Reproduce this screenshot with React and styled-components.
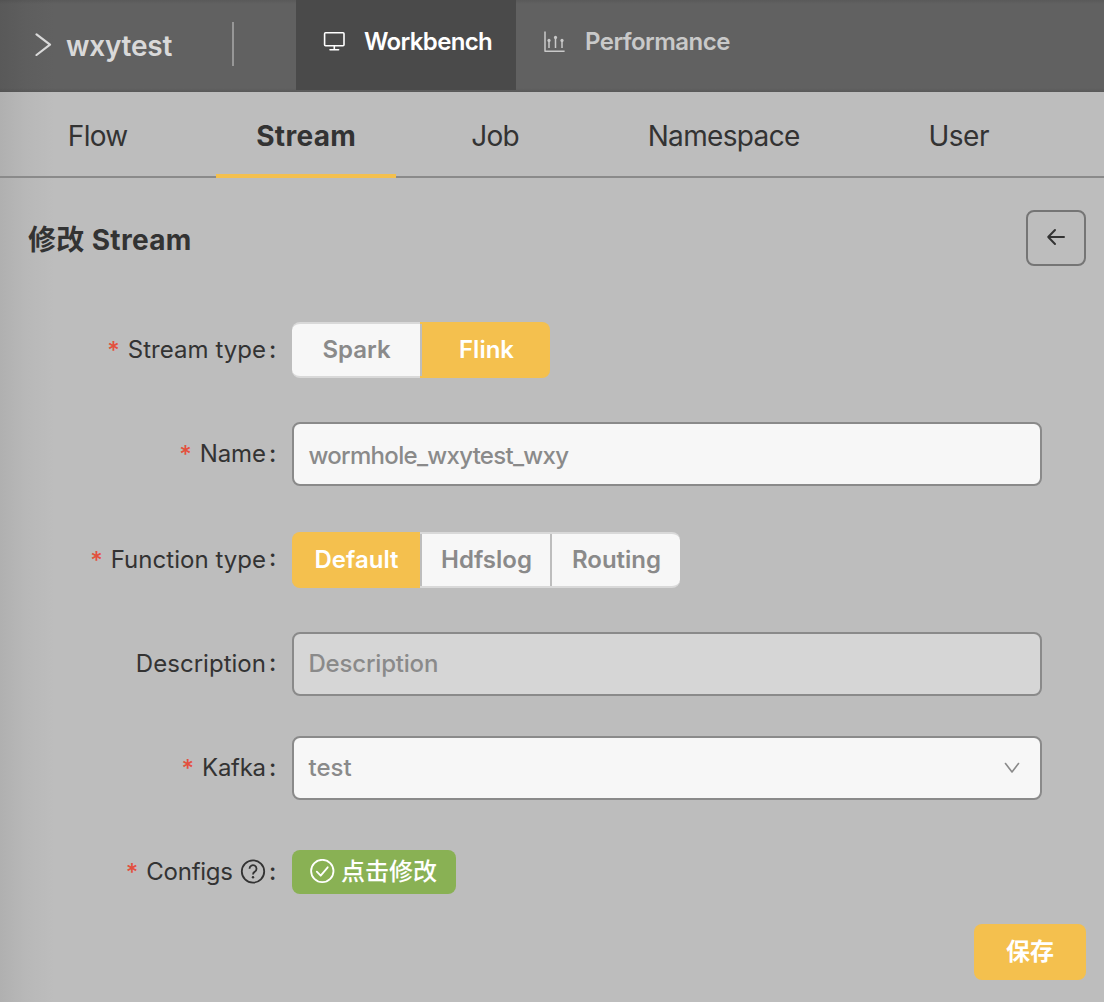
import React from 'react';
import styled, { createGlobalStyle } from 'styled-components';

const Global = createGlobalStyle`
  *, *::before, *::after { box-sizing: border-box; }
  body {
    margin: 0;
    background: #bdbdbd;
    font-family: Inter, "Noto Sans CJK SC", sans-serif;
    font-size: 24px;
    color: #333;
  }
  button, input { font: inherit; margin: 0; }
`;

const Page = styled.div`
  width: 1104px;
  height: 1002px;
  overflow: hidden;
  background: linear-gradient(90deg, #b0b0b0 0, #b8b8b8 26px, #bdbdbd 54px);
`;

const Text = styled.span`
  padding-bottom: ${(p) => p.$lift || 0}px;
  letter-spacing: ${(p) => p.$ls || 0}px;
  word-spacing: ${(p) => p.$ws || 0}px;
  margin-right: ${(p) => -(p.$ls || 0)}px;
  white-space: nowrap;
`;

const Header = styled.header`
  display: flex;
  height: 92px;
  background:
    linear-gradient(180deg, rgba(0, 0, 0, 0.08) 0, transparent 4px, transparent 88px, rgba(0, 0, 0, 0.08) 92px),
    linear-gradient(90deg, #595959 0, #5e5e5e 26px, #616161 54px);
`;

const Project = styled.div`
  display: flex;
  align-items: center;
  width: 234px;
  height: 44px;
  margin: 22px 62px 0 0;
  padding-left: 34px;
  gap: 14px;
  border-right: 2px solid #979797;
  color: #d9d9d9;
  font-size: 28px;
  font-weight: 560;
`;

const ProjectName = styled.span`
  padding-top: 4px;
  line-height: 40px;
`;

const NavItem = styled.a`
  display: flex;
  align-items: center;
  height: 90px;
  padding: 0 24px 8px 26px;
  gap: ${(p) => p.$gap || 18}px;
  width: ${(p) => p.$w}px;
  background: ${(p) => (p.$active ? '#4a4a4a' : 'transparent')};
  color: ${(p) => (p.$active ? '#fff' : '#c9c9c9')};
  font-weight: 600;
`;

const Tabs = styled.nav`
  display: flex;
  height: 86px;
  padding-left: 28px;
  border-bottom: 2px solid #8a8a8a;
`;

const Tab = styled.a`
  display: flex;
  justify-content: center;
  width: ${(p) => p.$w}px;
  height: 86px;
  margin-right: ${(p) => p.$gap || 0}px;
  border-bottom: 4px solid ${(p) => (p.$active ? '#f4c04e' : 'transparent')};
  font-size: 28px;
  font-weight: ${(p) => (p.$active ? 700 : 430)};
  line-height: 88px;
`;

const TitleBar = styled.div`
  display: flex;
  justify-content: space-between;
  align-items: flex-start;
  height: 120px;
  padding: 32px 18px 0 28px;
`;

const Title = styled.h1`
  margin: 0;
  font-size: 28px;
  font-weight: 700;
  line-height: 60px;
`;

const BackButton = styled.button`
  display: flex;
  align-items: center;
  justify-content: center;
  width: 60px;
  height: 56px;
  padding: 0 0 2px;
  border: 2px solid #757575;
  border-radius: 8px;
  background: transparent;
  color: #333;
`;

const Row = styled.div`
  display: flex;
  align-items: center;
  height: 104px;
  margin-bottom: ${(p) => p.$extra || 0}px;
`;

const Label = styled.label`
  display: flex;
  align-items: center;
  justify-content: flex-end;
  width: 276px;
  margin-right: 16px;
  font-weight: 430;
  line-height: 36px;
`;

const Star = styled.span`
  margin-right: 8px;
  padding-top: 2px;
  color: #e3503e;
  font-weight: 500;
`;

const Colon = styled.span`
  width: 7px;
  margin-left: 3px;
  padding-bottom: ${(p) => (p.$raise || 0) * 2}px;
  font-weight: 500;
`;

const RadioGroup = styled.div`
  display: flex;
  height: 56px;
`;

const Radio = styled.button`
  width: ${(p) => (p.$divider ? 130 : 128)}px;
  height: 56px;
  padding: 0 0 2px ${(p) => (p.$divider ? 3 : 1)}px;
  border: 0 solid ${(p) => (p.$on ? '#f4c04e' : '#d9d9d9')};
  border-width: 2px 0;
  background: ${(p) => (p.$on ? '#f4c04e' : '#f7f7f7')};
  box-shadow: ${(p) => (p.$divider ? 'inset 2px 0 #bdbdbd' : 'none')};
  color: ${(p) => (p.$on ? '#fff' : '#8a8a8a')};
  font-weight: 600;
  &:first-child { border-radius: 8px 0 0 8px; }
  &:last-child { border-radius: 0 8px 8px 0; }
`;

const Field = styled.div`
  display: flex;
  align-items: center;
  justify-content: space-between;
  width: 750px;
  height: 64px;
  padding: ${(p) => p.$top || 0}px 20px 0 14.5px;
  border: 2px solid #8a8a8a;
  border-radius: 8px;
  background: ${(p) => (p.$dim ? '#d6d6d6' : '#f7f7f7')};
  color: #8a8a8a;
  font-weight: 450;
`;

const ConfigTag = styled.button`
  display: flex;
  align-items: center;
  width: 164px;
  height: 44px;
  padding: 0 18px;
  gap: 6px;
  border: 0;
  border-radius: 8px;
  background: #89b154;
  color: #fff;
  font-weight: 500;
`;

const Footer = styled.div`
  display: flex;
  justify-content: flex-end;
  padding-right: 18px;
`;

const SaveButton = styled.button`
  width: 112px;
  height: 56px;
  padding: 0 0 6px;
  border: 0;
  border-radius: 8px;
  background: #f4c04e;
  color: #fff;
  font-weight: 700;
`;

const Icon = styled.svg`
  flex: none;
  display: block;
  fill: none;
  stroke: currentColor;
  stroke-linecap: round;
  stroke-linejoin: round;
  stroke-width: ${(p) => p.$sw || 2};
  margin-left: ${(p) => p.$ml || 0}px;
`;

const FormLabel = ({ text, ls, required, raise, children }) => (
  <Label>
    {required && <Star>*</Star>}
    <Text $ls={ls}>{text}</Text>
    {children}
    <Colon $raise={raise}>:</Colon>
  </Label>
);

export default function App() {
  return (
    <Page>
      <Global />
      <Header>
        <Project>
          <Icon width="18" height="24" viewBox="0 0 18 24" $sw={2.2}>
            <path d="M2.5 2.3 16 12.7 2.5 23" />
          </Icon>
          <ProjectName><Text $ls={-0.25}>wxytest</Text></ProjectName>
        </Project>
        <NavItem $active $w={220}>
          <Icon width="24" height="24" viewBox="0 0 24 24" $sw={1.6}>
            <rect x="2.6" y="3.7" width="19.4" height="13" rx="1" />
            <path d="M12.3 17v3.6M8 20.8h8.6" />
          </Icon>
          <Text $ls={-0.65}>Workbench</Text>
        </NavItem>
        <NavItem $w={240} $gap={19}>
          <Icon width="24" height="24" viewBox="0 0 24 24" $sw={1.5}>
            <path d="M3 2.600v19.600h19.600M7 12v7M13.500 9v10M20 12v7" strokeLinecap="butt" />
            <g fill="currentColor" stroke="none">
              <circle cx="7" cy="11.4" r="1.6" />
              <circle cx="13.5" cy="8.4" r="1.6" />
              <circle cx="20" cy="11.4" r="1.6" />
            </g>
          </Icon>
          <Text $ls={-0.55}>Performance</Text>
        </NavItem>
      </Header>
      <Tabs>
        <Tab $w={140} $gap={48}><Text $ls={-0.7}>Flow</Text></Tab>
        <Tab $w={180} $active><Text $ls={0.3}>Stream</Text></Tab>
        <Tab $w={199}><Text $ls={-0.7}>Job</Text></Tab>
        <Tab $w={258}><Text $ls={-0.65}>Namespace</Text></Tab>
        <Tab $w={212}><Text $ls={-0.5}>User</Text></Tab>
      </Tabs>
      <TitleBar>
        <Title><Text $ls={0.3} $ws={0.2}>修改 Stream</Text></Title>
        <BackButton aria-label="Back">
          <Icon width="20" height="18" viewBox="0 0 20 18" $sw={2}>
            <path d="M18 9H2.2M9 2 2.2 9 9 16" />
          </Icon>
        </BackButton>
      </TitleBar>
      <Row>
        <FormLabel required text="Stream type" ls={0.03} />
        <RadioGroup>
          <Radio><Text>Spark</Text></Radio>
          <Radio $on $divider><Text>Flink</Text></Radio>
        </RadioGroup>
      </Row>
      <Row $extra={2}>
        <FormLabel required text="Name" ls={-0.1} />
        <Field $top={2}><Text $ls={-0.7}>wormhole_wxytest_wxy</Text></Field>
      </Row>
      <Row>
        <FormLabel required raise={2} text="Function type" ls={0.03} />
        <RadioGroup>
          <Radio $on><Text>Default</Text></Radio>
          <Radio $divider><Text>Hdfslog</Text></Radio>
          <Radio $divider><Text>Routing</Text></Radio>
        </RadioGroup>
      </Row>
      <Row>
        <FormLabel raise={1} text="Description" ls={0.03} />
        <Field $dim><Text $ls={-0.2} $lift={2}>Description</Text></Field>
      </Row>
      <Row>
        <FormLabel required text="Kafka" ls={-0.3} />
        <Field>
          <Text $lift={2}>test</Text>
          <Icon width="16" height="12" viewBox="0 0 16 12" $sw={1.6}>
            <path d="M1.5 1.5 8 10l6.500-8.500" />
          </Icon>
        </Field>
      </Row>
      <Row>
        <FormLabel required text="Configs" ls={-0.25}>
          <Icon width="26" height="26" viewBox="0 0 26 26" $sw={1.8} $ml={7}>
            <circle cx="13" cy="12.500" r="11.200" />
            <path d="M9.500 9.700a3.500 3.500 0 1 1 5.400 2.900c-1.400.8-1.900 1.400-1.900 3" strokeLinecap="butt" />
            <circle cx="13" cy="18.300" r="1.200" fill="currentColor" stroke="none" />
          </Icon>
        </FormLabel>
        <ConfigTag>
          <Icon width="25" height="26" viewBox="0 0 25 26" $sw={1.8}>
            <circle cx="12.300" cy="12" r="11.200" />
            <path d="M6.800 12.700l3.900 4 7-8.400" />
          </Icon>
          <Text $lift={5}>点击修改</Text>
        </ConfigTag>
      </Row>
      <Footer>
        <SaveButton>保存</SaveButton>
      </Footer>
    </Page>
  );
}
